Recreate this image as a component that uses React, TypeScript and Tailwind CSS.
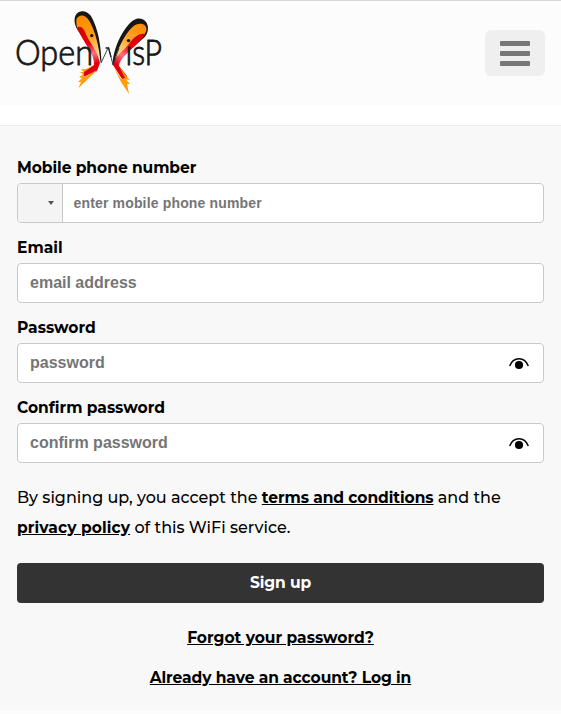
import React from "react";

function Logo() {
  return (
    <svg className="overflow-visible" width="150" height="86" viewBox="15 9 150 86" role="img" aria-label="OpenWisp">
      <defs>
        <linearGradient id="wingL" x1="80" y1="18" x2="98" y2="60" gradientUnits="userSpaceOnUse">
          <stop offset="0" stopColor="#ff8c00" />
          <stop offset="0.45" stopColor="#ff9d18" />
          <stop offset="1" stopColor="#ffeab0" />
        </linearGradient>
        <linearGradient id="wingR" x1="144" y1="26" x2="116" y2="60" gradientUnits="userSpaceOnUse">
          <stop offset="0" stopColor="#ff8c00" />
          <stop offset="0.45" stopColor="#ffa32a" />
          <stop offset="1" stopColor="#ffeab0" />
        </linearGradient>
        <linearGradient id="redL" x1="80" y1="28" x2="98" y2="70" gradientUnits="userSpaceOnUse">
          <stop offset="0" stopColor="#d80000" />
          <stop offset="0.4" stopColor="#e60010" />
          <stop offset="0.62" stopColor="#ff7088" />
          <stop offset="0.85" stopColor="#e00010" />
        </linearGradient>
        <linearGradient id="redR" x1="142" y1="36" x2="114" y2="68" gradientUnits="userSpaceOnUse">
          <stop offset="0" stopColor="#d80000" />
          <stop offset="0.35" stopColor="#e60010" />
          <stop offset="0.65" stopColor="#ff7088" />
          <stop offset="0.9" stopColor="#e00010" />
        </linearGradient>
      </defs>
      <path d="M101.500 63C101 45 98 28 91 16C86 9 77 10 75 17C73.500 22 76 28 79 32L90 50Z" fill="#171717" />
      <path d="M100.500 62C99 46 95 30 89 20.500C85 14 79 14.500 76.500 19C75.500 25 78 31 82 36L95 58Z" fill="url(#wingL)" />
      <path d="M77 28C79 25.500 83 27 85 32C88 41 97 49 100 63L97 71L83 77L84 71L94 65C95 55 84 43 77 28Z" fill="url(#redL)" />
      <path d="M94.500 65L86 69L81 69.500L84 72L80 72L83 74.500L79 77L82 78L78 82L81 82L78.500 88L91 76L97 70L84 77L84 72Z" fill="#ff9d0a" />
      <path d="M112.500 65C113 48 123 28 133 20.500C140 15.500 148 20 148 28C148 35 144 38 139 42L121 58Z" fill="#171717" />
      <path d="M114 63C117 50 124 35 132.500 27C138 22 146 23 146.500 29C146 35 140 39 133 45L119 60Z" fill="url(#wingR)" />
      <path d="M145 34C139 33 133 38 129 44C123 52 114 56 113 65L122 79L126 79L127 76L119 66C120 55 140 45 145 34Z" fill="url(#redR)" />
      <path d="M113.500 67L121 82L129 94L127 84L130 84L126 79.500L130 80L127 77L119.500 67L125 78L121 79Z" fill="#ff9d0a" />
      <g fill="#161616" stroke="#161616" fontFamily="Lato, sans-serif" fontWeight="300">
        <text x="15" y="64.500" fontSize="35.500" textLength="78" lengthAdjust="spacingAndGlyphs" strokeWidth="0.850">Open</text>
        <text x="125.500" y="64.500" fontSize="34.500" textLength="36.500" lengthAdjust="spacingAndGlyphs" strokeWidth="0.900">ısP</text>
      </g>
      <circle cx="91.700" cy="35.600" r="1.700" fill="#161616" />
      <circle cx="128.500" cy="40.600" r="1.700" fill="#161616" />
      <path d="M101 63L108.500 47L113 65L119 48" fill="none" stroke="#333" strokeWidth="0.900" />
      <path d="M105.500 48h3M108.500 48L111 57" fill="none" stroke="#222" strokeWidth="1.300" />
    </svg>
  );
}

function Eye() {
  return (
    <svg className="mt-0.5 shrink-0" width="22" height="14" viewBox="0 0 22 14" role="img" aria-label="Show password">
      <path d="M1.700 9C3.500 3.900 6.800 1.700 11 1.700S18.500 3.900 20.300 9" fill="none" stroke="#000" strokeWidth="1.500" />
      <circle cx="11" cy="8" r="4.100" />
    </svg>
  );
}

const bold = "font-bold text-[15.5px] whitespace-nowrap";

function Field({ label, placeholder, eye }: { label: string; placeholder: string; eye?: boolean }) {
  return (
    <div className="h-20">
      <label className={`block h-[23px] leading-4 ${bold}`}>{label}</label>
      <div className="flex h-10 items-center rounded border border-[#c9c9c9] bg-white pr-[13px] pl-3">
        <input className="min-w-0 flex-1 font-['Liberation_Sans',Arial,sans-serif] text-base font-bold outline-none placeholder:text-[#757575]" placeholder={placeholder} />
        {eye && <Eye />}
      </div>
    </div>
  );
}

export default function App() {
  return (
    <div className="h-[714px] w-full overflow-hidden bg-[#fcfcfc] font-['Montserrat','Inter',sans-serif] text-base font-medium text-black">
      <header className="flex h-[105px] items-start justify-between border-t border-[#d9d9d9] bg-[#fcfcfc] pt-2 pr-4 pl-[15px]">
        <Logo />
        <button aria-label="Menu" className="mt-[21px] flex h-[46px] w-[60px] flex-col items-center justify-center gap-[5px] rounded-md bg-[#efefef]">
          <span className="h-[5px] w-[30px] rounded-[1px] bg-[#777]" />
          <span className="h-[5px] w-[30px] rounded-[1px] bg-[#777]" />
          <span className="h-[5px] w-[30px] rounded-[1px] bg-[#777]" />
        </button>
      </header>
      <div className="h-5 bg-white" />
      <main className="h-[585px] border-t border-[#ececec] bg-[#f8f8f8] px-[17px] pt-[34px]">
        <div className="h-20">
          <label className={`block h-[23px] leading-4 tracking-[-0.06px] ${bold}`}>Mobile phone number</label>
          <div className="flex h-10 overflow-hidden rounded border border-[#c9c9c9] bg-white">
            <div className="flex w-[45px] items-center justify-end border-r border-[#c9c9c9] bg-[#f4f4f4] pr-2">
              <span className="border-x-[3px] border-t-4 border-x-transparent border-t-[#555]" />
            </div>
            <input className="min-w-0 flex-1 pl-[10.500px] font-['Liberation_Sans',Arial,sans-serif] text-sm font-bold tracking-[0.16px] outline-none placeholder:text-[#757575]" placeholder="enter mobile phone number" />
          </div>
        </div>
        <Field label="Email" placeholder="email address" />
        <Field label="Password" placeholder="password" eye />
        <Field label="Confirm password" placeholder="confirm password" eye />
        <p className="pt-[3px] leading-[30px] whitespace-nowrap">
          <span>By signing up, you accept the </span>
          <a className={`underline tracking-[-0.07px] ${bold}`}>terms and conditions</a>
          <span> and the</span>
          <br />
          <a className={`underline tracking-[0.08px] ${bold}`}>privacy policy</a>
          <span> of this WiFi service.</span>
        </p>
        <button className={`mt-5 block h-10 w-full rounded bg-[#333] tracking-[-0.1px] text-white ${bold}`}>Sign up</button>
        <div className="mt-5 flex flex-col items-center gap-2.5 leading-[30px]">
          <a className={`underline ${bold} leading-[30px]`}>Forgot your password?</a>
          <a className={`underline tracking-[-0.08px] ${bold} leading-[30px]`}>Already have an account? Log in</a>
        </div>
      </main>
    </div>
  );
}
